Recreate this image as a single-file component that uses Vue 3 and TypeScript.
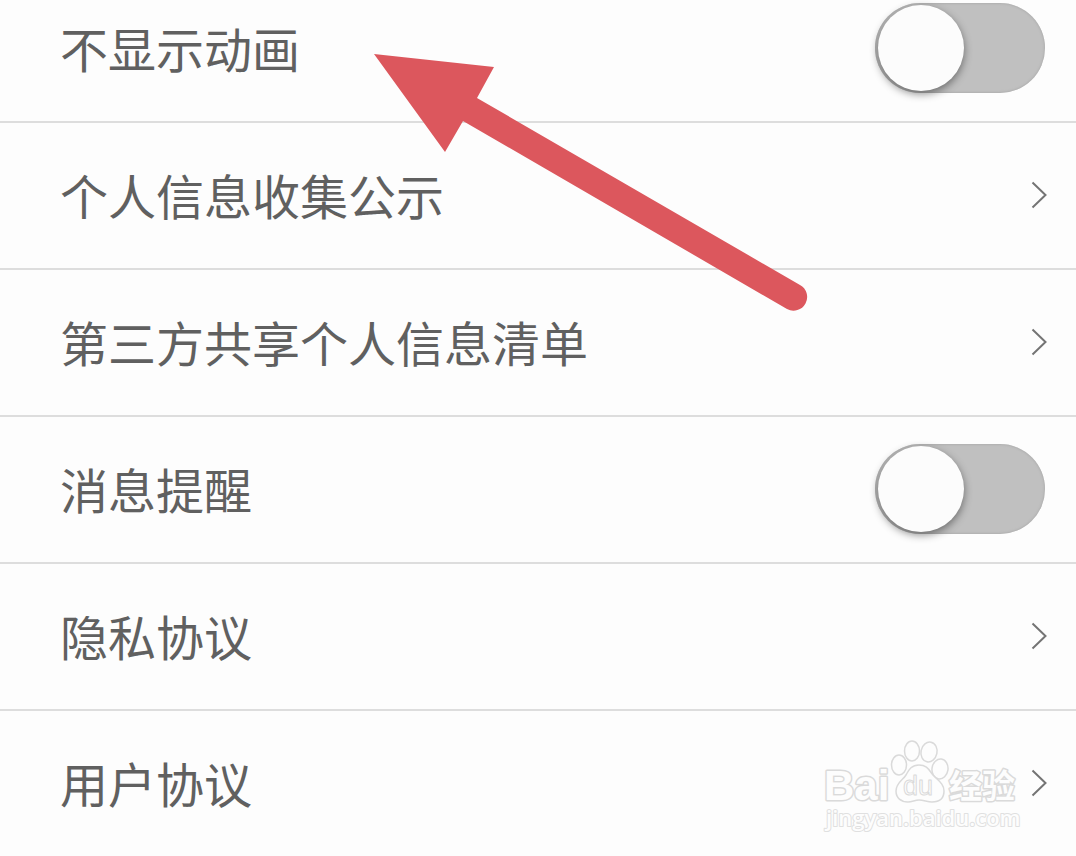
<script setup lang="ts">
import { ref } from 'vue'

interface Row {
  id: string
  label: string
  kind: 'toggle' | 'link'
}

const rows: Row[] = [
  { id: 'no-animation', label: '不显示动画', kind: 'toggle' },
  { id: 'collection', label: '个人信息收集公示', kind: 'link' },
  { id: 'sharing', label: '第三方共享个人信息清单', kind: 'link' },
  { id: 'reminder', label: '消息提醒', kind: 'toggle' },
  { id: 'privacy', label: '隐私协议', kind: 'link' },
  { id: 'terms', label: '用户协议', kind: 'link' },
]

const enabled = ref<Record<string, boolean>>({ 'no-animation': false, reminder: false })
</script>

<template>
  <main class="page">
    <ul class="list">
      <li v-for="row in rows" :key="row.id" class="item">
        <div v-if="row.kind === 'toggle'" class="row">
          <label :for="row.id" class="label">{{ row.label }}</label>
          <input :id="row.id" v-model="enabled[row.id]" type="checkbox" role="switch" class="switch" />
        </div>
        <a v-else class="row" :href="'#' + row.id">
          <span class="label">{{ row.label }}</span>
          <svg class="chevron" viewBox="0 0 17 28" aria-hidden="true">
            <path d="M1.5 1.5 L14.5 14 L1.5 26.5" />
          </svg>
        </a>
      </li>
    </ul>

    <svg class="arrow" viewBox="0 0 436 260" aria-hidden="true">
      <path d="M1 1 L121 14 L104 45 L427 232 A13.5 13.5 0 0 1 414 256 L90 68 L72 99 Z" />
    </svg>

    <svg class="watermark" viewBox="0 0 210 100" aria-hidden="true">
      <text class="brand" x="14" y="75">Bai</text>
      <text class="cn" x="139" y="73">经验</text>
      <ellipse cx="89" cy="40" rx="7.5" ry="10" />
      <ellipse cx="102" cy="26" rx="7.5" ry="10" />
      <ellipse cx="119" cy="27" rx="8" ry="10" transform="rotate(12 119 27)" />
      <ellipse cx="130" cy="44" rx="8" ry="10" transform="rotate(8 130 44)" />
      <path d="M109 40 C102 40 99 44 96 50 C93 55 86 58 86 66 C86 73 91 77 98 77 C102 77 105 75 109 75 C114 75 117 77 122 77 C130 77 134 73 134 66 C134 58 127 55 123 50 C119 45 117 40 109 40 Z" />
      <text class="du" x="93" y="70">du</text>
      <text class="url" x="16" y="101">jingyan.baidu.com</text>
    </svg>
  </main>
</template>

<style>
body {
  margin: 0;
  background: #fdfdfd;
}
</style>

<style scoped>
.page {
  position: relative;
  overflow: hidden;
  font-family: "Noto Sans CJK SC", "Noto Sans", sans-serif;
  color: #606060;
}

/* The list is scrolled a little past the top of the first row. */
.list {
  list-style: none;
  margin: -24px 0 0;
  padding: 0;
}

.item + .item {
  border-top: 2px solid #dddddd;
}

.row {
  display: flex;
  align-items: center;
  justify-content: space-between;
  box-sizing: border-box;
  min-height: 145px;
  padding: 0 28px 2px 60px;
  color: inherit;
  text-decoration: none;
}

.label {
  padding-bottom: 2px;
  font-size: 48px;
  line-height: 72px;
}

.switch {
  appearance: none;
  flex: none;
  width: 170px;
  height: 90px;
  margin: 0 3px 0 0;
  padding: 2px 3px;
  box-sizing: border-box;
  border-radius: 45px;
  background: #c0c0c0;
  box-shadow: inset 0 0 3px #a0a0a0;
}

.switch::before {
  content: "";
  display: block;
  width: 86px;
  height: 86px;
  border-radius: 50%;
  background: #fcfcfc;
  box-shadow: 0 3px 8px rgba(0, 0, 0, 0.45);
}

.switch:checked::before {
  margin-left: auto;
}

.chevron {
  flex: none;
  width: 17px;
  height: 28px;
  fill: none;
  stroke: #747474;
  stroke-width: 2;
}

.arrow {
  position: absolute;
  top: 53px;
  left: 373px;
  width: 436px;
  height: 260px;
  fill: #dc575d;
  pointer-events: none;
}

.watermark {
  position: absolute;
  right: 56px;
  bottom: 31px;
  width: 210px;
  height: 100px;
  overflow: visible;
  fill: #fdfdfd;
  stroke: #dadada;
  stroke-width: 1.5;
  stroke-linejoin: round;
  pointer-events: none;
}

.brand,
.du {
  font-family: "Liberation Sans", Arial, sans-serif;
}

.brand,
.cn {
  font-weight: 700;
  paint-order: stroke;
  stroke-width: 3;
}

.brand {
  font-size: 42px;
}

.cn {
  font-size: 33px;
}

.du {
  font-size: 27px;
  stroke-width: 1;
}

.url {
  font-family: "Open Sans", "Noto Sans", sans-serif;
  font-size: 22px;
  font-weight: 600;
  paint-order: stroke;
  stroke: #e0e0e0;
  stroke-width: 2;
}
</style>
